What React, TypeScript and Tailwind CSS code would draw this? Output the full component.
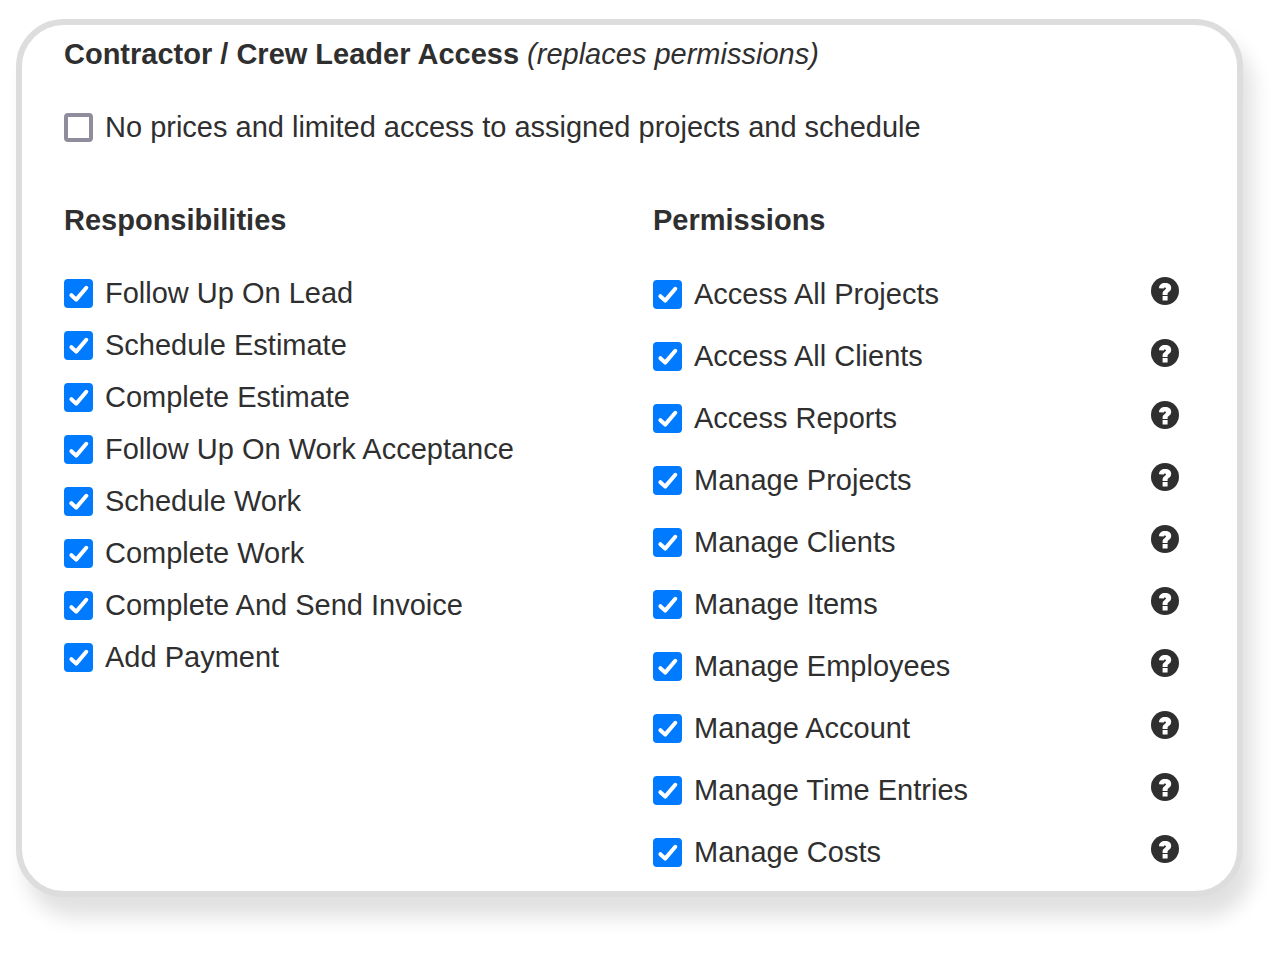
import React, { useState } from "react";

const RESPONSIBILITIES = [
  "Follow Up On Lead",
  "Schedule Estimate",
  "Complete Estimate",
  "Follow Up On Work Acceptance",
  "Schedule Work",
  "Complete Work",
  "Complete And Send Invoice",
  "Add Payment",
];

const PERMISSIONS = [
  "Access All Projects",
  "Access All Clients",
  "Access Reports",
  "Manage Projects",
  "Manage Clients",
  "Manage Items",
  "Manage Employees",
  "Manage Account",
  "Manage Time Entries",
  "Manage Costs",
];

interface CheckFieldProps {
  label: string;
  checked: boolean;
  onChange: () => void;
}

function CheckField({ label, checked, onChange }: CheckFieldProps) {
  return (
    <label className="flex items-center gap-3 cursor-pointer">
      <span className="grid shrink-0">
        <input
          type="checkbox"
          checked={checked}
          onChange={onChange}
          className="peer col-start-1 row-start-1 size-[29px] appearance-none rounded-[4px] border-4 border-[#8f8d9c] bg-white checked:border-[#007aff] checked:bg-[#007aff] cursor-pointer"
        />
        <svg
          viewBox="0 0 29 29"
          fill="none"
          stroke="white"
          strokeWidth="4"
          strokeLinecap="round"
          strokeLinejoin="round"
          className="col-start-1 row-start-1 size-[29px] pointer-events-none invisible peer-checked:visible"
        >
          <path d="M7.4 16.2 12.2 20.6 22.3 8.8" />
        </svg>
      </span>
      <span>{label}</span>
    </label>
  );
}

function HelpIcon() {
  return (
    <svg viewBox="0 0 28 28" className="size-7">
      <circle cx="14" cy="14" r="14" fill="currentColor" />
      <path
        fill="white"
        d="M8 11.3C8 8 10.4 6 14.2 6c3.700 0 6 1.700 6 4.700 0 2.300-1.200 3.400-2.500 4.400-.8.6-1.100.9-1.100 1.500V18h-5v-1.700c0-1.600.9-2.400 2.100-3.300.9-.7 1.300-1.100 1.300-1.700 0-.6-.4-.9-1-.9-.8 0-1.200.4-1.300 1.200zM11.600 19h5v4.600h-5z"
      />
    </svg>
  );
}

export default function App() {
  const [limited, setLimited] = useState(false);
  const [enabled, setEnabled] = useState<string[]>([...RESPONSIBILITIES, ...PERMISSIONS]);

  const toggle = (name: string) => {
    setEnabled((prev) =>
      prev.includes(name) ? prev.filter((n) => n !== name) : [...prev, name]
    );
  };

  return (
    <main className="min-h-screen bg-white pt-[19px] pl-4 pr-11 pb-14 font-['Liberation_Sans',Arial,sans-serif] text-[29px] text-[#2f2f2f]">
      <section className="rounded-[48px] border-6 border-[#ddd] bg-white pt-[7px] pb-2 pl-[42px] pr-[58px] shadow-[10px_20px_20px_rgba(0,0,0,0.12)]">
        <h2 className="font-bold leading-[44px]">
          Contractor / Crew Leader Access{" "}
          <em className="font-normal">(replaces permissions)</em>
        </h2>

        <div className="mt-[25px] leading-[52px]">
          <CheckField
            label="No prices and limited access to assigned projects and schedule"
            checked={limited}
            onChange={() => setLimited(!limited)}
          />
        </div>

        <div className="mt-[45px] grid grid-cols-2 gap-x-[63px]">
          {/* Responsibilities */}
          <div>
            <h3 className="font-bold leading-[44px]">Responsibilities</h3>
            <ul className="mt-[25px] leading-[52px]">
              {RESPONSIBILITIES.map((name) => (
                <li key={name}>
                  <CheckField
                    label={name}
                    checked={enabled.includes(name)}
                    onChange={() => toggle(name)}
                  />
                </li>
              ))}
            </ul>
          </div>

          {/* Permissions, each with its help button */}
          <div>
            <h3 className="font-bold leading-[44px]">Permissions</h3>
            <ul className="mt-[21px] leading-[62px]">
              {PERMISSIONS.map((name) => (
                <li key={name} className="flex items-start justify-between">
                  <CheckField
                    label={name}
                    checked={enabled.includes(name)}
                    onChange={() => toggle(name)}
                  />
                  <button
                    type="button"
                    aria-label={`Help for ${name}`}
                    className="mt-[14px] rounded-full cursor-pointer"
                  >
                    <HelpIcon />
                  </button>
                </li>
              ))}
            </ul>
          </div>
        </div>
      </section>
    </main>
  );
}
